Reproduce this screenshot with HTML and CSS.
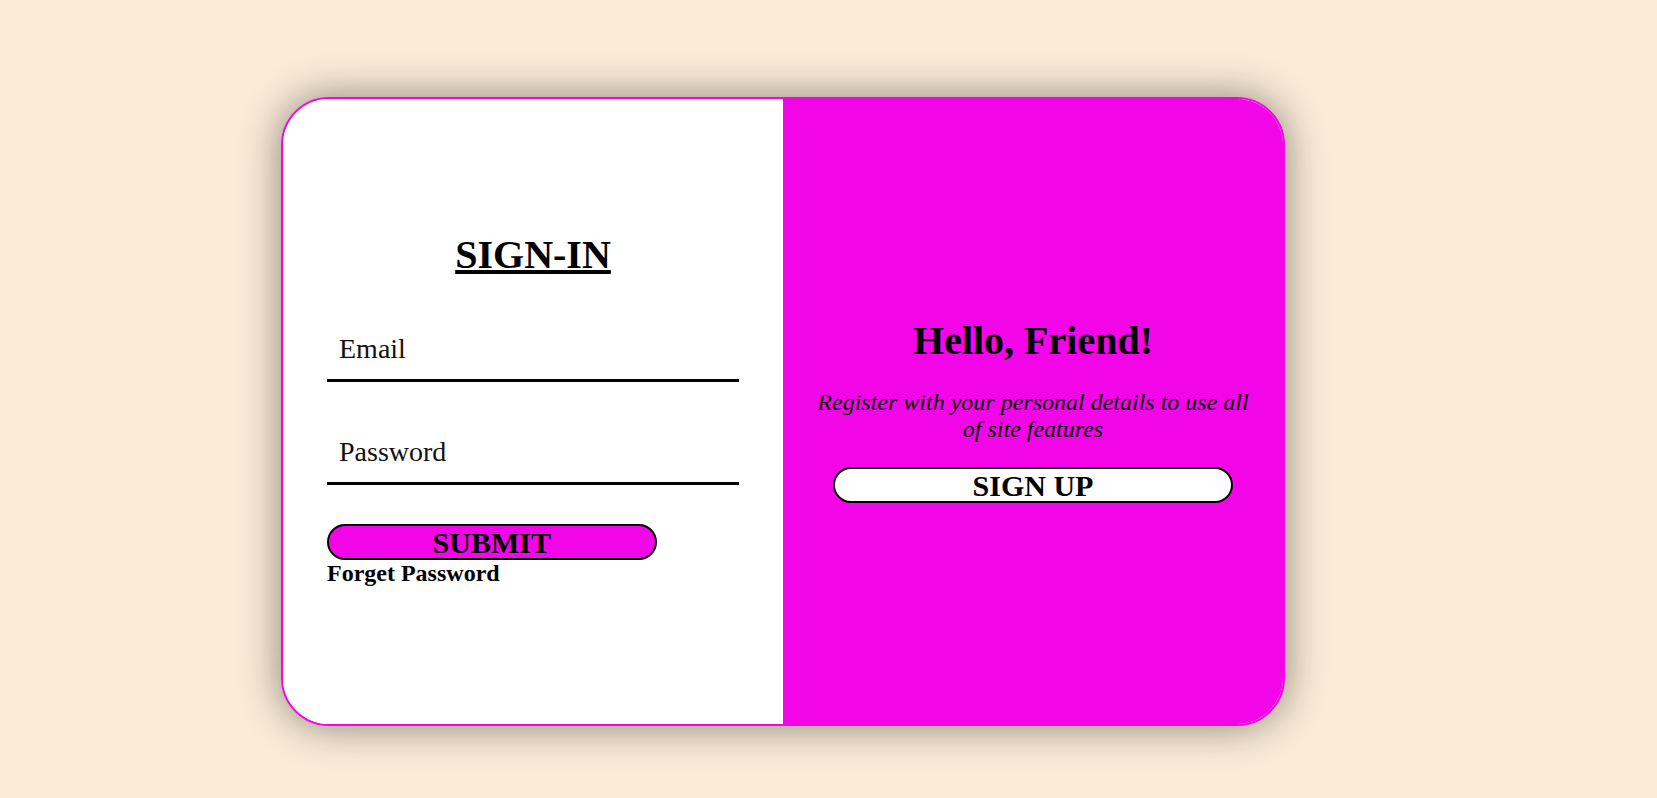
FILE: index.html
```html
<!DOCTYPE html>
<html lang="en">
<head>
<meta charset="utf-8">
<title>Sign in</title>
<link rel="stylesheet" href="styles.css">
</head>
<body>
<div class="page">
  <div class="card">
    <div class="pane pane-left">
      <h1 class="title"><u>SIGN-IN</u></h1>
      <form class="form">
        <input class="field field-email" type="email" placeholder="Email">
        <input class="field field-pass" type="password" placeholder="Password">
        <button class="btn btn-submit" type="button">SUBMIT</button>
        <a class="forget">Forget Password</a>
      </form>
    </div>
    <div class="pane pane-right">
      <h1 class="hello">Hello, Friend!</h1>
      <p class="lead">Register with your personal details to use all of site features</p>
      <button class="btn btn-signup" type="button">SIGN UP</button>
    </div>
  </div>
</div>
</body>
</html>
```
FILE: styles.css
```css
html, body {
  margin: 0;
  padding: 0;
}
body {
  background: #faebd7;
  font-family: "Liberation Serif", "Times New Roman", serif;
  color: #000;
}
.page {
  min-height: 100vh;
  box-sizing: border-box;
  padding: 97px 0 40px 281px;
}
.card {
  width: 1000px;
  height: 625px;
  border: 2px solid #f205e6;
  border-radius: 48px;
  overflow: hidden;
  display: flex;
  background: #fff;
  box-shadow: 0 0 40px rgba(0, 0, 0, 0.45);
}
.pane {
  flex: 1;
  display: flex;
  flex-direction: column;
  align-items: center;
  justify-content: center;
}
.pane-left {
  background: #fff;
}
.pane-right {
  background: #f205e6;
}
.title {
  margin: 0;
  font-size: 40px;
  font-weight: bold;
  line-height: normal;
}
.form {
  width: 412px;
  display: flex;
  flex-direction: column;
  align-items: flex-start;
}
.field {
  width: 100%;
  box-sizing: border-box;
  border: none;
  border-bottom: 3px solid #000;
  outline: none;
  background: transparent;
  font-family: "Liberation Serif", "Times New Roman", serif;
  font-size: 28px;
  line-height: normal;
  padding: 10px 12px 14px;
  margin: 0;
  color: #000;
}
.field::placeholder {
  color: #111;
  opacity: 1;
}
.field-email {
  margin-top: 45px;
}
.field-pass {
  margin-top: 44px;
}
.btn {
  height: 36px;
  box-sizing: border-box;
  border: 2px solid #000;
  border-radius: 20px;
  padding: 0;
  font-family: "Liberation Serif", "Times New Roman", serif;
  font-size: 30px;
  font-weight: bold;
  line-height: normal;
  color: #000;
  cursor: pointer;
}
.btn-submit {
  width: 80%;
  margin-top: 39px;
  background: #f205e6;
}
.forget {
  font-size: 24px;
  font-weight: bold;
  line-height: normal;
  color: #000;
  margin-bottom: 5px;
}
.hello {
  margin: 0;
  font-size: 40px;
  font-weight: bold;
  line-height: normal;
}
.lead {
  width: 442px;
  margin: 25px 0 0;
  font-size: 24px;
  font-style: italic;
  line-height: normal;
  text-align: center;
}
.btn-signup {
  width: 400px;
  margin-top: 24px;
  margin-bottom: 3px;
  background: #fff;
}
```
